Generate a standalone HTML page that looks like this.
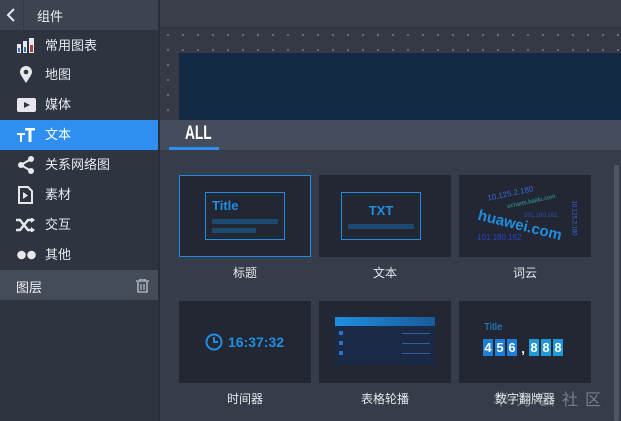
<!DOCTYPE html>
<html><head><meta charset="utf-8"><style>
*{margin:0;padding:0;box-sizing:border-box}
body{width:621px;height:421px;overflow:hidden;background:#363c49;font-family:"Liberation Sans","Noto Sans CJK SC",sans-serif;position:relative}
.abs{position:absolute}
#side{left:0;top:0;width:158px;height:421px;background:#2f3441}
#hdr{left:0;top:0;width:158px;height:30px;background:#3d4350}
.item{position:absolute;left:0;width:158px;height:30px;color:#e8eaee;font-size:13px;line-height:30px}
.item span{position:absolute;left:45px}
.card{position:absolute;width:132px;height:82px;background:#232734}
.lbl{position:absolute;width:132px;text-align:center;color:#e6e8ec;font-size:12px}
</style></head><body>
<div id="side" class="abs"></div>
<div class="abs" style="left:158px;top:0;width:2px;height:421px;background:#2a2e38"></div>
<div id="hdr" class="abs"></div>
<div class="abs" style="left:23px;top:0;width:1px;height:30px;background:#343945"></div>
<svg class="abs" style="left:6px;top:8px" width="10" height="14"><path d="M8 1L2 7L8 13" stroke="#e8eaee" stroke-width="2" fill="none"/></svg>
<div class="abs" style="left:37px;top:6px;color:#eceef2;font-size:13px">组件</div>

<div class="item" style="top:31px"><svg style="position:absolute;left:17px;top:7px" width="18" height="16"><rect x="0" y="6" width="4" height="9" fill="#e6e8ec"/><rect x="6" y="3" width="4" height="12" fill="#e6e8ec"/><rect x="12" y="0" width="5" height="15" fill="#e6e8ec"/><rect x="1" y="10" width="2" height="4" fill="#3a6fb0"/><rect x="7" y="9" width="2" height="5" fill="#3a6fb0"/><rect x="13" y="7" width="3" height="7" fill="#b04040"/></svg><span>常用图表</span></div>
<div class="item" style="top:60px"><svg style="position:absolute;left:20px;top:6px" width="12" height="18"><path d="M6 17C2 11 0 8 0 6A6 6 0 0 1 12 6C12 8 10 11 6 17Z" fill="#e6e8ec"/><circle cx="6" cy="6" r="2.3" fill="#2f3441"/></svg><span>地图</span></div>
<div class="item" style="top:90px"><svg style="position:absolute;left:17px;top:8px" width="19" height="14"><rect width="19" height="14" rx="2" fill="#e6e8ec"/><path d="M7 4L13 7L7 10Z" fill="#2f3441"/></svg><span>媒体</span></div>
<div class="item" style="top:120px;background:#2e8ff0;color:#fff"><svg style="position:absolute;left:17px;top:7px" width="18" height="16"><path d="M0 6H8V8H5V15H3V8H0Z M8 1H18V3.5H14.5V15H11.5V3.5H8Z" fill="#fff"/></svg><span>文本</span></div>
<div class="item" style="top:150px"><svg style="position:absolute;left:17px;top:6px" width="18" height="18"><path d="M14 3L4 9L14 15" stroke="#e6e8ec" stroke-width="2" fill="none"/><circle cx="14" cy="3" r="3" fill="#e6e8ec"/><circle cx="4" cy="9" r="3" fill="#e6e8ec"/><circle cx="14" cy="15" r="3" fill="#e6e8ec"/></svg><span>关系网络图</span></div>
<div class="item" style="top:180px"><svg style="position:absolute;left:18px;top:6px" width="15" height="18"><path d="M1 1H10L14 5V17H1Z" stroke="#e6e8ec" stroke-width="2" fill="none"/><path d="M5 6L10 9.5L5 13Z" fill="#e6e8ec"/></svg><span>素材</span></div>
<div class="item" style="top:210px"><svg style="position:absolute;left:16px;top:8px" width="19" height="14"><path d="M0 2H4L12 12H16M0 12H4L12 2H16" stroke="#e6e8ec" stroke-width="2.5" fill="none"/><path d="M15 -1L19 2L15 5ZM15 9L19 12L15 15Z" fill="#e6e8ec"/></svg><span>交互</span></div>
<div class="item" style="top:240px"><svg style="position:absolute;left:17px;top:10px" width="20" height="10"><circle cx="4.5" cy="5" r="4.3" fill="#e6e8ec"/><circle cx="14.5" cy="5" r="4.3" fill="#e6e8ec"/></svg><span>其他</span></div>
<div class="abs" style="left:0;top:270px;width:158px;height:30px;background:#444b59"></div>
<div class="abs" style="left:16px;top:277px;color:#eceef2;font-size:13px">图层</div>
<svg class="abs" style="left:136px;top:279px" width="13" height="14"><path d="M0 2H13M4 2V0H9V2M2 3V13H11V3" stroke="#aab0ba" stroke-width="1.6" fill="none"/><path d="M5 5V11M8 5V11" stroke="#aab0ba" stroke-width="1.4"/></svg>

<div class="abs" style="left:160px;top:0;width:461px;height:27px;background:#3a3f4b"></div>
<div class="abs" style="left:160px;top:27px;width:461px;height:2px;background:#30343e"></div>
<div class="abs" style="left:160px;top:29px;width:461px;height:91px;background:#353a46;background-image:radial-gradient(circle,#6a7080 0.9px,transparent 1.3px);background-size:15px 15px;background-position:0.5px -1.5px"></div>
<div class="abs" style="left:179px;top:53px;width:442px;height:67px;background:#132a45"></div>

<div class="abs" style="left:160px;top:120px;width:461px;height:30px;background:#454c5b"></div>
<div class="abs" style="left:185px;top:123px;color:#fff;font-size:19px;font-weight:bold;font-family:'Liberation Sans Narrow','Liberation Sans',sans-serif;transform:scaleX(0.72);transform-origin:left">ALL</div>
<div class="abs" style="left:169px;top:147px;width:50px;height:3px;background:#2e8ff0"></div>
<div class="abs" style="left:614px;top:165px;width:5px;height:256px;background:#4e5564;border-radius:2px"></div>

<div class="card" style="left:179px;top:175px;border:1px solid #1e8fe0"></div>
<div class="abs" style="left:205px;top:192px;width:80px;height:48px;border:1px solid #1e8fe0"></div>
<div class="abs" style="left:212px;top:198px;color:#1e8fe0;font-size:13px;font-weight:bold">Title</div>
<div class="abs" style="left:212px;top:219px;width:66px;height:5px;background:#1c4a70"></div>
<div class="abs" style="left:212px;top:228px;width:44px;height:5px;background:#1c4a70"></div>
<div class="lbl" style="left:179px;top:264px">标题</div>

<div class="card" style="left:319px;top:175px"></div>
<div class="abs" style="left:341px;top:192px;width:80px;height:48px;border:1px solid #1e8fe0"></div>
<div class="abs" style="left:341px;top:203px;width:80px;text-align:center;color:#1e8fe0;font-size:13px;font-weight:bold">TXT</div>
<div class="abs" style="left:348px;top:224px;width:66px;height:5px;background:#1c4a70"></div>
<div class="lbl" style="left:319px;top:264px">文本</div>

<div class="card" style="left:459px;top:175px;overflow:hidden">
<div class="abs" style="left:28px;top:14px;color:#3a6ad8;font-size:8px;transform:rotate(-12deg)">10.125.2.180</div>
<div class="abs" style="left:48px;top:24px;color:#2aa8a0;font-size:6px;transform:rotate(-12deg)">echarts.baidu.com</div>
<div class="abs" style="left:18px;top:42px;color:#1e8fe0;font-size:15px;font-weight:bold;transform:rotate(14deg)">huawei.com</div>
<div class="abs" style="left:65px;top:38px;color:#2a4fb0;font-size:6px">101.180.162</div>
<div class="abs" style="left:18px;top:58px;color:#2446c8;font-size:8px">101.180.162</div>
<div class="abs" style="left:97px;top:40px;color:#3a6ad8;font-size:6px;transform:rotate(90deg)">10.125.2.180</div>
</div>
<div class="lbl" style="left:459px;top:264px">词云</div>

<div class="card" style="left:179px;top:301px"></div>
<svg class="abs" style="left:205px;top:333px" width="18" height="18"><circle cx="9" cy="9" r="7.5" stroke="#1e8fe0" stroke-width="2" fill="none"/><path d="M9 4V9H13" stroke="#1e8fe0" stroke-width="2" fill="none"/></svg>
<div class="abs" style="left:228px;top:334px;color:#1e8fe0;font-size:14px;font-weight:bold">16:37:32</div>
<div class="lbl" style="left:179px;top:390px">时间器</div>

<div class="card" style="left:319px;top:301px"></div>
<div class="abs" style="left:335px;top:317px;width:100px;height:48px;background:#1a2a44"></div>
<div class="abs" style="left:335px;top:317px;width:100px;height:9px;background:linear-gradient(90deg,#1e8fe0,#1a5a9a)"></div>
<div class="abs" style="left:339px;top:331px;width:4px;height:4px;background:#2e6fd0"></div>
<div class="abs" style="left:339px;top:341px;width:4px;height:4px;background:#2e6fd0"></div>
<div class="abs" style="left:339px;top:351px;width:4px;height:4px;background:#2e6fd0"></div>
<div class="abs" style="left:402px;top:333px;width:28px;height:1px;background:#3a5a9a"></div>
<div class="abs" style="left:402px;top:343px;width:28px;height:1px;background:#3a5a9a"></div>
<div class="abs" style="left:402px;top:353px;width:28px;height:1px;background:#3a5a9a"></div>
<div class="lbl" style="left:319px;top:390px">表格轮播</div>

<div class="card" style="left:459px;top:301px"></div>
<div class="abs" style="left:484px;top:322px;color:#1e8fe0;font-size:10px">Title</div>
<div class="abs" style="left:483px;top:339px;display:flex;gap:2px">
<b style="width:10px;height:17px;background:#1e7fd8;color:#fff;font-size:13px;text-align:center;line-height:17px">4</b>
<b style="width:10px;height:17px;background:#1e7fd8;color:#fff;font-size:13px;text-align:center;line-height:17px">5</b>
<b style="width:10px;height:17px;background:#1e7fd8;color:#fff;font-size:13px;text-align:center;line-height:17px">6</b>
<b style="width:8px;color:#fff;font-size:13px;line-height:20px;text-align:center">,</b>
<b style="width:10px;height:17px;background:#1e9ad8;color:#fff;font-size:13px;text-align:center;line-height:17px">8</b>
<b style="width:10px;height:17px;background:#1e9ad8;color:#fff;font-size:13px;text-align:center;line-height:17px">8</b>
<b style="width:10px;height:17px;background:#1e9ad8;color:#fff;font-size:13px;text-align:center;line-height:17px">8</b>
</div>
<div class="lbl" style="left:459px;top:390px">数字翻牌器</div>
<div class="abs" style="left:493px;top:386px;color:rgba(200,205,215,0.45);font-size:16px;letter-spacing:7px">华为云社区</div>
</body></html>
